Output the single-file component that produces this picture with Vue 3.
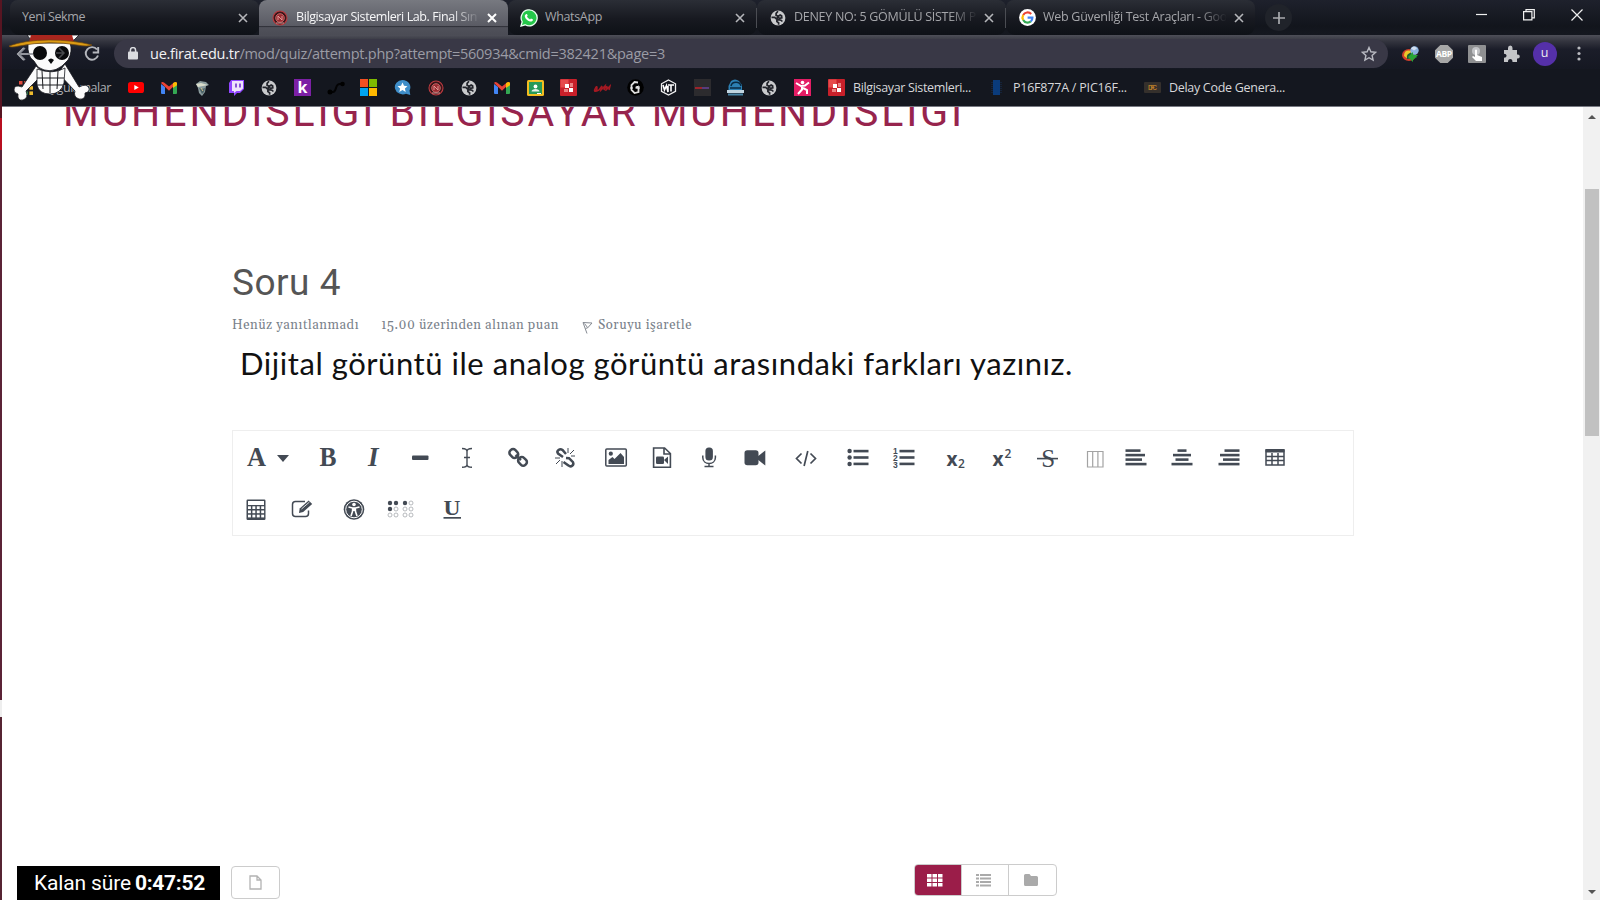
<script setup>
const vFit = {
  mounted(el, { value }) {
    const natural = el.getBoundingClientRect().width
    el.style.letterSpacing = (value - natural) / el.textContent.length + 'px'
  }
}

const svg = (w, h, body) => `<svg width="${w}" height="${h}" viewBox="0 0 ${w} ${h}" style="display:block">${body}</svg>`

const globe = svg(16, 16, '<circle cx="8" cy="8" r="7.4" fill="#c9cacc"/><path d="M1.5 7.4h3.2l2.2 2.1v2.1l1.7 1.2v2M8 1.3 6.1 3.4v1.9l2.4.9 1.6-1.1 1.5.8.2 1.9-2.3.5-1.8-1-1.2 1.2 1.4 1.2 3.1.5 1.4 1.3" fill="none" stroke="#22242b" stroke-width="1.7"/>')
const gmail = svg(16, 16, '<path d="M0 4v9q0 1 1 1h3V7z" fill="#4285f4"/><path d="M12 7v7h3q1 0 1-1V4z" fill="#34a853"/><path d="M0 3q1-1.8 3-.6l5 4 5-4q2-1.2 3 .6L8 10.8z" fill="#ea4335"/><path d="M12 3.2l1-.8q2-1.2 3 .6v2.2L12 8z" fill="#fbbc04"/>')
const crest = svg(16, 16, '<circle cx="8" cy="8" r="7" fill="#3b1519" stroke="#bd3b40" stroke-width="1.1"/><circle cx="8" cy="8" r="4.3" fill="#9c2b31" stroke="#d47a78" stroke-width=".8"/><path d="M6 10V6l4 4V6M4 13h8" fill="none" stroke="#e6a4a0" stroke-width=".9"/>')
const squares = svg(17, 17, '<rect width="17" height="17" rx="1" fill="#c8202a"/><rect x=".5" y=".5" width="8" height="8" fill="#e64b4d"/><path d="M5 5h4v4H5zM9 9h4v4H9z" fill="#fff"/><path d="M10 4h3v4h-3zM4 10h4v3H4z" fill="#e98282"/>')

const tabs = [
  { title: 'Yeni Sekme', w: 63 },
  { title: 'Bilgisayar Sistemleri Lab. Final Sın', w: 181, icon: crest, active: true, fade: true },
  { title: 'WhatsApp', w: 57, icon: svg(18, 18, '<path d="M1 17 2.2 12.8A8 8 0 1 1 5.2 15.8z" fill="#25c74a" stroke="#e9fff0" stroke-width="1.3"/><path d="M6.2 5.1c.8-.8 1.5 1.3 1.5 1.5l-.7 1c.7 1.4 1.7 2.2 3 2.8l1-1 2 1c0 1.7-1.8 2.4-3 2-2.7-.9-4.7-2.7-5.2-5-.1-1 .6-1.6 1.4-2.3z" fill="#fff"/>'), line: true },
  { title: 'DENEY NO: 5 GÖMÜLÜ SİSTEM P', w: 182, icon: globe, fade: true, line: true },
  { title: 'Web Güvenliği Test Araçları - Goo', w: 184, icon: svg(17, 17, '<circle cx="8.5" cy="8.5" r="8.4" fill="#fff"/><g fill="none" stroke-width="2.2"><path d="M12.2 5A5 5 0 0 0 4.2 6" stroke="#ea4335"/><path d="M4.2 6a5 5 0 0 0 0 5" stroke="#fbbc05"/><path d="M4.2 11a5 5 0 0 0 7.6 1.4" stroke="#34a853"/><path d="M11.8 12.4a5 5 0 0 0 1.6-3.8H8.6" stroke="#4285f4"/></g>'), fade: true }
]

const bookmarks = [
  svg(16, 13, '<rect y="1" width="16" height="11" rx="2.6" fill="#f00"/><path d="M6.3 4v5L10.8 6.5z" fill="#fff"/>'),
  gmail,
  svg(16, 16, '<path d="M2 4 6 1l6 1 3 3-3 1-1 6-3 4-3-3-1-5z" fill="#8a9b9d"/><path d="M2 4 7 3l7 2-5 1-5 1z" fill="#d9dccb"/><path d="m5 8 3 1 3-1-1 4-2 2z" fill="#4d6468"/><path d="m7 8 2 3" stroke="#d6c08c"/>'),
  svg(16, 16, '<path d="M3 0h13v9l-4 4H9l-3 3v-3H1V3z" fill="#9146ff"/><path d="M4 1h11v7.5L12 11H8.5L6 13v-2H4z" fill="#eee5fb"/><path d="M8 3.6v4M12 3.6v4" stroke="#7133cc" stroke-width="1.6"/>'),
  globe,
  svg(17, 17, '<rect width="17" height="17" fill="#7c20a5"/><text x="8.5" y="14" text-anchor="middle" font-family="Open Sans, sans-serif" font-weight="700" font-size="16" fill="#fff">k</text>'),
  svg(18, 16, '<path d="M2 12h4q2 0 3-4t4-4h3" fill="none" stroke="#030304" stroke-width="2"/><circle cx="3" cy="12" r="2.5" fill="#000"/><circle cx="15.5" cy="4" r="2.3" fill="#000"/>'),
  svg(17, 17, '<path d="M0 0h8v8H0z" fill="#f25022"/><path d="M9 0h8v8H9z" fill="#7fba00"/><path d="M0 9h8v8H0z" fill="#00a4ef"/><path d="M9 9h8v8H9z" fill="#ffb900"/>'),
  svg(17, 16, '<path d="M8.5 0a8 7.2 0 0 1 7 10.5l.8 4.5-4.3-1.2A8 7.2 0 1 1 8.500 0z" fill="#3f8ec9"/><path d="m8.500 2.500 1.500 3.300 3.500.4-2.600 2.300.8 3.400-3.200-1.800-3.200 1.800.8-3.400-2.600-2.300 3.500-.4z" fill="#fff"/>'),
  crest, globe, gmail,
  svg(17, 16, '<rect width="17" height="16" rx="1.500" fill="#f4bd20"/><rect x="2" y="2" width="13" height="12" fill="#279a59"/><circle cx="8.500" cy="6.500" r="1.900" fill="#fff"/><path d="M4.500 11.500c0-3.500 8-3.500 8 0z" fill="#e5f3ea"/><path d="M10 13h4v1h-4z" fill="#fff"/>'),
  squares,
  svg(18, 10, '<path d="M1 8q3 0 3-3T2 6t4 1l3-4-1 4 4-4-1 4q3-5 3-3t-1 3 4-4l-1 4" fill="none" stroke="#a51922" stroke-width="1.500"/>'),
  svg(17, 17, '<circle cx="8.500" cy="8.500" r="8.300" fill="#000"/><path d="M11 3.500 7.500 3l-3 3v5l3 3 4-1V9L8.500 8.500" fill="none" stroke="#dedede" stroke-width="1.800"/><path d="m9 8 3-1v3M3 9h3" fill="none" stroke="#eee"/>'),
  svg(17, 17, '<path d="M8.500 1 15.500 4.800v7.500L8.500 16 1.500 12.300V4.800z" fill="none" stroke="#f1f1f1" stroke-width="1.300"/><path d="m3 6 1.500 5 2-4.500L8 13V7M8 6h6M11 6.500v6" fill="none" stroke="#fff" stroke-width="1.600"/>'),
  svg(17, 17, '<rect width="17" height="17" fill="#2c2b2e"/><path d="M1 9h7" stroke="#b8242c" stroke-width="1.600"/><path d="M8 9h7" stroke="#654192" stroke-width="1.600"/>'),
  svg(17, 17, '<path d="M1.500 11V7L4 2q4-3 8 0l3 4v5z" fill="#2c80b4"/><path d="M4 7c1-5 9-5 10 0M3 9h11" fill="none" stroke="#092a43" stroke-width="1.500"/><rect y="11" width="17" height="3" fill="#c0d4df"/><path d="M1 15.500h15" stroke="#4683a4" stroke-width="2"/>'),
  globe,
  svg(17, 17, '<rect width="17" height="17" fill="#e41d65"/><circle cx="8.500" cy="3.500" r="1.800" fill="#fff"/><path d="m2 4 5 3 4-.5 4-3M8 6.500v4L4 15M9 9l4 2v4" fill="none" stroke="#fff" stroke-width="2"/>')
]

const textBookmarks = [
  { t: 'Bilgisayar Sistemleri...', w: 118, icon: squares },
  { t: 'P16F877A / PIC16F...', w: 114, icon: svg(17, 17, '<path d="M5 1h7v15H5z" fill="#0a3b7b"/><path d="M4 3v11M13 3v11" stroke="#173057" stroke-dasharray="1 1"/>') },
  { t: 'Delay Code Genera...', w: 116, icon: svg(17, 11, '<rect width="17" height="11" rx="1" fill="#35302c"/><text x="8.500" y="8" text-anchor="middle" textLength="9" font-family="Liberation Sans, sans-serif" font-weight="700" font-size="6.500" fill="#b47b29">DFC</text>') }
]

const ink = '#434a54'
const g = body => svg(26, 24, `<g fill="${ink}">${body}</g>`)
const rows4 = list => list.map(([x, w], i) => `<rect x="${x}" y="${3.3 + i * 4.5}" width="${w}" height="2.600"/>`).join('')
const serif = 'font-family="Liberation Serif, serif" font-weight="700"'
const calcDots = [0, 1, 2].map(r => [0, 1, 2, 3].map(c => `<rect x="${5 + c * 4.400}" y="${9.300 + r * 4.200}" width="2.900" height="2.700" fill="#fff"/>`).join('')).join('')
const braille = [0, 1, 2, 3].map(c => [0, 1, 2].map(r => {
  const on = (r === 0 && c < 3) || (r === 1 && c === 0)
  return `<circle cx="${[3, 9, 18, 24][c]}" cy="${6 + r * 6}" r="${on ? 2.200 : 2}" fill="${on ? ink : 'none'}" stroke="${on ? 'none' : '#a5a8ad'}" stroke-width=".8"/>`
}).join('')).join('')

const toolbar = [
  [
    [{ wide: true, i: svg(44, 24, `<text x="2" y="20" ${serif} font-size="27" textLength="19" lengthAdjust="spacingAndGlyphs" fill="${ink}">A</text><path d="M32 9h12l-6 7z" fill="${ink}"/>`) },
      { i: g(`<text x="4.500" y="20" ${serif} font-size="27" textLength="17" lengthAdjust="spacingAndGlyphs">B</text>`) },
      { i: g(`<text x="7" y="20" ${serif} font-style="italic" font-size="27" textLength="12">I</text>`) },
      { i: g('<rect x="5" y="9.500" width="16.500" height="4.500" rx="1"/>') },
      { i: g(`<path d="M8 2.500c3 0 5 .5 5 3v13c0 2-2 2.800-5 2.800M18 2.500c-3 0-5 .5-5 3v13c0 2 2 2.800 5 2.800M10 11.500h6" fill="none" stroke="${ink}" stroke-width="1.400"/>`) }],
    [{ i: g(`<g fill="none" stroke="${ink}" stroke-width="2.500"><rect x="4.300" y="4" width="9" height="7" rx="3" transform="rotate(45 8.800 7.500)"/><rect x="13" y="11.800" width="9" height="7" rx="3" transform="rotate(45 17.500 15.300)"/><path d="m10.500 9 5.500 5"/></g>`) },
      { i: g(`<g fill="none" stroke="${ink}"><path d="M11 11 6 7.500q-1.500-2 .5-3.500t4 0L14 8M14 12l3 .2 4 4q1 2-.8 3.500t-3.800-.3L11.500 16" stroke-width="2.500"/><path d="M16 7V2M18 8l4-4M19 10h4M10 15v6M8 14l-4 4M8 12H3" stroke-width="1"/></g>`) }],
    [{ i: g(`<rect x="2.800" y="3" width="20.500" height="17" rx="1" fill="none" stroke="${ink}" stroke-width="1.500"/><circle cx="7.800" cy="7.700" r="2.100"/><path d="M5.500 18v-4l4-3 2 2 6-6 3.500 4v7z"/>`) },
      { i: g(`<path d="M4.600 2h11l5.800 5.500v13.700H4.600zM15 2v6h6.400" fill="none" stroke="${ink}" stroke-width="1.600"/><rect x="7" y="10.500" width="8" height="7.500" rx="1.300"/><path d="m15 14 4-3.500V18z"/>`) },
      { i: g(`<rect x="9.400" y="1.500" width="7.500" height="13" rx="3.500"/><path d="M6.800 9.500v2c0 8 12.600 8 12.600 0v-2M13 17.500v3M8.500 20.600h9" fill="none" stroke="${ink}" stroke-width="1.500"/>`) },
      { i: g('<rect x="2.500" y="4.300" width="14" height="15" rx="2.800"/><path d="m15 11 8.300-6.500v15L15 13z"/>') }],
    [{ i: g(`<path d="m8.500 7.500-5 5 5 5M17.500 7.500l5 5-5 5M14.800 5l-3.700 15" fill="none" stroke="${ink}" stroke-width="1.700"/>`) }],
    [{ i: g('<circle cx="4.600" cy="5" r="2.200"/><circle cx="4.600" cy="11.500" r="2.200"/><circle cx="4.600" cy="18" r="2.200"/><rect x="8.500" y="3.800" width="15" height="2.600"/><rect x="8.500" y="10.200" width="15" height="2.600"/><rect x="8.500" y="16.600" width="15" height="2.600"/>') },
      { i: g('<g font-family="Liberation Sans, sans-serif" font-weight="700" font-size="8.500"><text x="2" y="7.500">1</text><text x="2" y="14.500">2</text><text x="2" y="21.500">3</text></g><rect x="8.500" y="3.800" width="15" height="2.600"/><rect x="8.500" y="10.200" width="15" height="2.600"/><rect x="8.500" y="16.600" width="15" height="2.600"/>') }],
    [{ i: g('<g font-family="Open Sans, sans-serif" font-weight="700"><text x="3.500" y="19.500" font-size="20" textLength="11" lengthAdjust="spacingAndGlyphs">x</text><text x="15" y="22" font-size="12" font-weight="600">2</text></g>') },
      { i: g('<g font-family="Open Sans, sans-serif" font-weight="700"><text x="3.500" y="19.500" font-size="20" textLength="11" lengthAdjust="spacingAndGlyphs">x</text><text x="15.500" y="12" font-size="12" font-weight="600">2</text></g>') },
      { i: g('<text x="6.300" y="20.500" font-family="Liberation Serif, serif" font-size="25">S</text><path d="M2 11.800h21v1.600H2z"/>') },
      { i: svg(26, 24, '<path d="M5.500 5.500h15.500v15.500H5.500zM10.700 5.500V21M15.900 5.500V21" fill="none" stroke="#a3a3a3" stroke-width="1.200"/>') }],
    [{ i: g(rows4([[2.500, 15], [2.500, 19.500], [2.500, 16.500], [2.500, 21]])) },
      { i: g(rows4([[8.500, 9], [4, 18], [6.500, 13], [2.500, 21]])) },
      { i: g(rows4([[8.500, 15], [4, 19.500], [7, 16.500], [2.500, 21]])) },
      { i: g(`<path d="M4 4h18v15H4zM10 7v12M16 7v12M4 10.500h18M4 14.500h18" fill="none" stroke="${ink}" stroke-width="1.500"/><rect x="3.500" y="3" width="19" height="3.500" rx="1"/>`) }]
  ],
  [
    [{ i: g(`<rect x="3.500" y="2.500" width="19" height="20.500" rx="1.200"/><rect x="5" y="4" width="16" height="4" fill="#fff"/>${calcDots}`) },
      { i: g(`<path d="M16 4.500H6.500q-3 0-3 3v9q0 3 3 3h10q3 0 3-3v-3" fill="none" stroke="${ink}" stroke-width="1.500"/><path d="m10 16 .7-4.500 9-8 3.500 3.500-9 8z"/><path d="m12.500 12 8-7" stroke="#fff" stroke-width=".8"/>`) }],
    [{ i: g(`<circle cx="13" cy="12.500" r="10.300"/><circle cx="13" cy="12.500" r="8.300" fill="none" stroke="#fff" stroke-width="1"/><circle cx="13" cy="7.500" r="1.800" fill="#fff"/><path d="m7.500 10 4 1h3l4-1M13 11v3m-1.300-2.500-.2 3-1.500 4.500m4.300-7.500.2 3 1.500 4.500" fill="none" stroke="#fff" stroke-width="1.600"/>`) },
      { i: svg(27, 24, braille) }],
    [{ i: g(`<text x="4.500" y="17.500" ${serif} font-size="22" textLength="17" lengthAdjust="spacingAndGlyphs">U</text><rect x="4.500" y="20" width="17.500" height="1.700"/>`) }]
  ]
]

const extensions = [
  svg(20, 18, '<ellipse cx="8" cy="10" rx="7" ry="6" fill="#cf3f2c"/><path d="M3 11q0-7 8-5l2 5q-5 5-10 0" fill="#ebc829"/><path d="M6 14q-2-6 7-7l3 6z" fill="#1d5c35"/><circle cx="13.500" cy="5.500" r="4.200" fill="#8bb2df"/><path d="M10 3.500q3-4 6 0l-3 2z" fill="#d1dff0"/><path d="m7 12 5-5v3h5l-5 5v2z" fill="#28a536"/>'),
  svg(18, 18, '<path d="M5.300 0h7.400L18 5.300v7.400L12.700 18H5.300L0 12.700V5.300z" fill="#a7a7a7"/><text x="9" y="12" text-anchor="middle" textLength="16" font-family="Open Sans, sans-serif" font-weight="700" font-size="8.500" fill="#fff">ABP</text>'),
  svg(18, 18, '<rect width="18" height="18" rx="1" fill="#8f9092"/><circle cx="8" cy="6" r="4" fill="#c2c3c6"/><path d="M7 5q1-1 2 0v5l5 2v4H8l-4-4 1-1 2 1z" fill="#fff"/>'),
  svg(18, 18, '<path d="M2 5h4V3q0-2.500 2.300-2.500T10.500 3v2H15v4.500h.8q2 0 2 2t-2 2H15V17h-4.500q0-3-2.300-3T6 17H2v-4.200q2.600 0 2.600-2T2 8.700z" fill="#c4c5c8"/>')
]
</script>

<template>
  <div class="screen">
    <div class="desktop-edge"><i class="red"></i><i class="wine"></i><i class="pale"></i><i class="rest"></i></div>
    <div class="window">
      <header class="tabstrip">
        <div v-for="t in tabs" :key="t.title" class="tab" :class="{ active: t.active, line: t.line }">
          <span v-if="t.icon" class="favicon" v-html="t.icon"></span>
          <span class="tab-title" :class="{ fade: t.fade }"><span v-fit="t.w" class="fit">{{ t.title }}</span></span>
          <svg class="x" width="10" height="10" viewBox="0 0 10 10"><path d="M1 1l8 8M9 1L1 9" /></svg>
        </div>
        <div class="newtab"><svg width="12" height="12" viewBox="0 0 12 12"><path d="M6 0v12M0 6h12" stroke="#a9aaae" stroke-width="1.700" /></svg></div>
        <div class="controls">
          <svg width="11" height="12" viewBox="0 0 11 12"><path d="M0 5.500h11" /></svg>
          <svg width="12" height="12" viewBox="0 0 12 12"><path d="M.6 2.600h8.300v8.300H.6zM3 2.500V.6h8.300v8.300H9" /></svg>
          <svg width="12" height="12" viewBox="0 0 12 12"><path d="M.5.5l11 11M11.500.5l-11 11" /></svg>
        </div>
      </header>

      <div class="navbar">
        <div class="nav-buttons">
          <svg width="16" height="16" viewBox="0 0 16 16"><path d="M15 8H2M8 2L2 8l6 6" stroke="#b5b7bd" /></svg>
          <svg width="16" height="16" viewBox="0 0 16 16"><path d="M1 8h13M8 2l6 6-6 6" stroke="#72757b" /></svg>
          <svg width="16" height="16" viewBox="0 0 16 16"><path d="M13 3.500A6.300 6.300 0 1 0 14 9.500M14.200 1v5.500H8.700" stroke="#b5b7bd" /></svg>
        </div>
        <div class="omnibox">
          <svg width="10" height="13" viewBox="0 0 10 13"><rect y="4.500" width="10" height="8" rx="1" fill="#dbdce0" /><path d="M2.400 5V3.200a2.600 2.600 0 0 1 5.200 0V5" fill="none" stroke="#dbdce0" stroke-width="1.500" /></svg>
          <span v-fit="515" class="fit url"><b>ue.firat.edu.tr</b>/mod/quiz/attempt.php?attempt=560934&amp;cmid=382421&amp;page=3</span>
          <svg class="star" width="16" height="16" viewBox="0 0 16 16"><path d="M8 1.500l1.900 4.300 4.700.5-3.500 3.100 1 4.700L8 11.700l-4.100 2.400 1-4.700L1.400 6.300l4.700-.5z" fill="none" stroke="#b9bac2" stroke-width="1.400" /></svg>
        </div>
        <div class="extensions">
          <span v-for="(e, i) in extensions" :key="i" class="ext" v-html="e"></span>
          <span class="avatar">u</span>
          <svg width="4" height="15" viewBox="0 0 4 15"><circle cx="2" cy="2" r="1.600" /><circle cx="2" cy="7.500" r="1.600" /><circle cx="2" cy="13" r="1.600" /></svg>
        </div>
      </div>

      <div class="bookmarks">
        <div class="apps">
          <svg width="14" height="14" viewBox="0 0 14 14">
            <path d="M0 0h3.500v3.500H0zM5.200 0h3.500v3.500H5.200zM10.400 0H14v3.500h-3.600z" fill="#df4b3c" />
            <path d="M0 5.200h3.500v3.500H0z" fill="#34a45a" /><path d="M5.200 5.200h3.500v3.500H5.200z" fill="#397fdc" /><path d="M10.400 5.200H14v3.500h-3.600z" fill="#edba2d" />
            <path d="M0 10.400h3.500V14H0zM5.200 10.400h3.500V14H5.200z" fill="#34a45a" /><path d="M10.400 10.400H14V14h-3.600z" fill="#edba2d" />
          </svg>
          <span v-fit="69" class="fit">Uygulamalar</span>
        </div>
        <span v-for="(b, i) in bookmarks" :key="i" class="bm" v-html="b"></span>
        <span v-for="b in textBookmarks" :key="b.t" class="bm-text"><span class="bm-icon" v-html="b.icon"></span><span v-fit="b.w" class="fit">{{ b.t }}</span></span>
      </div>

      <svg class="mascot" width="86" height="66" viewBox="0 0 86 66">
        <g stroke="#15171d" stroke-width=".8" fill="#fbfbfb">
          <path d="M28 31 14 52q-8-3-8 3 0 3 4 4-1 7 5 6 6-2 3-9L36 38z" />
          <path d="m57 29 14 23q8-4 10 1 1 4-4 5 1 7-6 6-6-2-4-8L50 38z" />
          <path d="m19 0 4 5h43l5-5z" />
          <path d="M29 34q16 6 28-1l-1 15q-3 11-14 11t-13-9z" />
          <path d="M20 8q-1 14 6 18l4 6q12 8 24-1l6-6q5-9 2-17z" />
        </g>
        <path d="M29 43h27M29 50h26M34 36l1 18M42 37v21M50 36l-1 18" fill="none" stroke="#1b1c20" stroke-width="1" />
        <circle cx="32" cy="18" r="7" fill="#090a0c" /><circle cx="54" cy="18" r="7" fill="#090a0c" /><path d="M40 25q3-3 6 0l-3 4z" fill="#090a0c" />
        <path d="M23 0h41l2 7H21z" fill="#a9261e" />
        <path d="M1 11Q17 5 41 5t43 5q-4 2-15 0-27-5-58 1-9 2-10 0z" fill="#dc9c14" stroke="#73480b" stroke-width=".7" />
        <g fill="none" stroke="#868991" stroke-width="1.500"><path d="M25 19H11M17 13l-6 6 6 6" /><path d="M48 18h8M51 13l5 5-5 5" stroke="#484a4d" /></g>
      </svg>

      <main class="viewport">
        <div class="page">
          <h1><span v-fit="902" class="fit">MÜHENDİSLİĞİ BİLGİSAYAR MÜHENDİSLİĞİ</span></h1>
          <section class="question">
            <h2><span v-fit="109" class="fit">Soru 4</span></h2>
            <div class="info">
              <span v-fit="127" class="fit">Henüz yanıtlanmadı</span>
              <span v-fit="178" class="fit score">15.00 üzerinden alınan puan</span>
              <svg width="11" height="13" viewBox="0 0 11 13"><path d="M1 1.500l4 11M1 1.500l9 .5-4.500 5-2 .3M2.500 2.500l3 4" fill="none" stroke="#858a92" stroke-width="1" /></svg>
              <span v-fit="94" class="fit">Soruyu işaretle</span>
            </div>
            <p><span v-fit="833" class="fit">Dijital görüntü ile analog görüntü arasındaki farkları yazınız.</span></p>
            <div class="editor">
              <div v-for="(row, r) in toolbar" :key="r" class="row">
                <div v-for="(group, k) in row" :key="k" class="group">
                  <span v-for="(b, n) in group" :key="n" class="tool" :class="{ wide: b.wide }" v-html="b.i"></span>
                </div>
              </div>
            </div>
          </section>
          <footer class="bottom">
            <div class="timer"><span v-fit="97" class="fit">Kalan süre</span><b v-fit="70" class="fit">0:47:52</b></div>
            <div class="file"><svg width="13" height="15" viewBox="0 0 13 15"><path d="M1 1h7l4 4v9H1zM8 1v4h4" fill="none" stroke="#b3b3b3" stroke-width="1.300" /></svg></div>
            <div class="views">
              <span class="on"><svg width="16" height="13" viewBox="0 0 16 13"><path d="M0 0h4.500v3.500H0zM5.500 0H10v3.500H5.500zM11 0h4.500v3.500H11zM0 4.500h4.500V8H0zM5.500 4.500H10V8H5.500zM11 4.500h4.500V8H11zM0 9h4.500v3.500H0zM5.500 9H10v3.500H5.500zM11 9h4.500v3.500H11z" fill="#fff" /></svg></span>
              <span><svg width="15" height="13" viewBox="0 0 15 13"><path d="M0 0h3v2H0zM4 0h11v2H4zM0 3.500h3v2H0zM4 3.500h11v2H4zM0 7h3v2H0zM4 7h11v2H4zM0 10.500h3v2H0zM4 10.500h11v2H4z" fill="#aaa" /></svg></span>
              <span><svg width="14" height="12" viewBox="0 0 14 12"><path d="M0 1.500Q0 0 1.500 0h4L7 2h5.500Q14 2 14 3.500v7q0 1.500-1.500 1.500h-11Q0 12 0 10.500z" fill="#aaa" /></svg></span>
            </div>
          </footer>
        </div>
        <div class="scrollbar"><i class="up"></i><i class="thumb"></i><i class="down"></i></div>
      </main>
    </div>
  </div>
</template>

<style>
body { margin: 0; overflow: hidden; }
</style>

<style scoped>
.screen { display: flex; width: 1600px; height: 900px; overflow: hidden; background: #fff; font-family: "Open Sans", "Noto Sans", sans-serif; }
.screen * { box-sizing: border-box; }
.fit { display: inline-block; white-space: pre; flex: none; }
.desktop-edge { width: 2px; flex: none; display: flex; flex-direction: column; padding-top: 118px; background: #571522; }
.desktop-edge .red { height: 32px; background: #b80f20; }
.desktop-edge .wine { height: 550px; background: #5b2336; }
.desktop-edge .pale { height: 17px; background: #eee; }
.desktop-edge .rest { flex: 1; background: #562432; }
.window { position: relative; width: 1598px; height: 900px; display: flex; flex-direction: column; }

.tabstrip { height: 35px; display: flex; padding-left: 8px; background: linear-gradient(#1e212c, #12151c 75%, #151820); flex: none; }
.tab { position: relative; width: 249px; flex: none; display: flex; align-items: center; padding: 0 11px 0 12px; color: #a5a6aa; font-size: 12.5px; background: linear-gradient(#2b2e36, #171920 55%, #0e1117); border-radius: 8px 8px 9px 9px; }
.tab.active { color: #f7f7f8; background: linear-gradient(#777980, #5a5b64 74%, #2c2d35 75%, #50515a 79%, #4b4c55); border-radius: 8px 8px 0 0; }
.tab.line { border-right: 1px solid transparent; }
.tab.line::after { content: ""; position: absolute; right: -1px; top: 8px; width: 1px; height: 20px; background: #4b4d53; }
.favicon { width: 18px; display: flex; justify-content: center; margin-right: 7px; }
.tab.active .favicon { margin-left: 0; }
.tab-title { flex: 1; overflow: hidden; line-height: 20px; padding-bottom: 1px; }
.fade { mask-image: linear-gradient(90deg, #000 155px, transparent 184px); }
.x { flex: none; fill: none; stroke: #b5b6ba; stroke-width: 1.6; }
.active .x { stroke: #fff; stroke-width: 2; }
.newtab { width: 27px; height: 27px; margin: 4px 0 0 10px; border-radius: 50%; display: flex; align-items: center; justify-content: center; background: #20232a; }
.controls { margin-left: auto; display: flex; gap: 36px; padding: 9px 17px 0 0; }
.controls svg { fill: none; stroke: #f0f0f0; stroke-width: 1.2; }

.navbar { height: 34px; display: flex; align-items: center; flex: none; padding: 4px 0 1px 14px; background: linear-gradient(#4e4f58, #34353f 18%, #1b1d29 42%, #151822); }
.nav-buttons { display: flex; gap: 18px; width: 98px; }
.nav-buttons svg { fill: none; stroke-width: 1.9; }
.omnibox { width: 1274px; height: 29px; flex: none; border-radius: 15px; background: #393846; display: flex; align-items: center; padding: 0 11px 0 14px; }
.url { margin-left: 12px; font-size: 14.5px; line-height: 20px; color: #9b9ca5; }
.url b { font-weight: 400; color: #f3f3f5; }
.star { margin-left: auto; }
.extensions { display: flex; align-items: center; padding-left: 6px; }
.ext { width: 33.400px; display: flex; justify-content: center; }
.avatar { width: 24px; height: 24px; border-radius: 50%; background: #5530a9; color: #eee; font-size: 12.5px; line-height: 22px; text-align: center; margin: 0 18px 0 5px; }
.extensions > svg { fill: #b9babf; margin-left: 2px; }

.bookmarks { height: 38px; flex: none; display: flex; align-items: center; padding-left: 17px; background: #14171f; border-bottom: 1px solid #777982; color: #d7d7da; font-size: 12.5px; }
.apps { width: 100px; display: flex; align-items: center; gap: 9px; flex: none; color: #adafb3; }
.bm { width: 33.330px; flex: none; display: flex; justify-content: center; }
.bm-text { display: flex; align-items: center; margin-left: 9px; }
.bm-text + .bm-text { margin-left: 17px; }
.bm-icon { width: 17px; margin-right: 8px; }
.mascot { position: absolute; left: 6px; top: 35px; }

.viewport { height: 793px; display: flex; overflow: hidden; background: #fff; }
.page { width: 1581px; display: flex; flex-direction: column; overflow: hidden; }
h1, h2 { font-family: Roboto, sans-serif; font-weight: 400; margin: 0; }
h1 { font-size: 41px; line-height: 48px; height: 48px; margin: -19px 0 0 61px; color: #97244d; }
.question { margin: 125px 0 0 230px; }
h2 { font-size: 37px; line-height: 44px; height: 46px; color: #555; }
.info { display: flex; align-items: center; height: 20px; margin-top: 8px; font-family: Gelasio, "DejaVu Serif", serif; font-size: 13px; color: #79818a; }
.score { margin: 0 23px 0 22px; }
.info svg { margin: 4px 5px 0 0; }
p { margin: 6px 0 0 8px; height: 50px; font-family: Lato, sans-serif; font-size: 31px; line-height: 44px; color: #111; }
.editor { width: 1122px; height: 106px; border: 1px solid #eee; margin-top: 39px; padding-top: 15px; }
.row { display: flex; gap: 5.500px; height: 51px; }
.group { display: flex; }
.group:nth-child(7) { margin-left: -10px; }
.tool { width: 46.200px; height: 24px; display: flex; justify-content: center; }
.tool.wide { width: 72px; padding-right: 4px; }

.bottom { margin-top: auto; height: 36px; display: flex; align-items: flex-start; }
.timer { width: 203px; height: 34px; margin: 2px 0 0 15px; padding-left: 17px; display: flex; gap: 4px; align-items: center; background: #000; color: #fff; font-family: Roboto, sans-serif; font-size: 21px; line-height: 34px; }
.file { width: 49px; height: 33px; margin: 2px 0 0 11px; border: 1px solid #ccc; border-radius: 4px; display: flex; align-items: center; justify-content: center; }
.views { width: 143px; height: 32px; margin-left: 634px; display: flex; border: 1px solid #ccc; border-radius: 4px; overflow: hidden; }
.views span { flex: 1; display: flex; align-items: center; justify-content: center; padding-right: 4px; border-left: 1px solid #ccc; }
.views .on { background: #9b1d49; border-left: 0; margin: -1px 0 -1px -1px; }
.scrollbar { width: 17px; background: #f1f1f1; display: flex; flex-direction: column; align-items: center; }
.up, .down { width: 0; height: 0; border: 4px solid transparent; }
.up { border-bottom-color: #555; border-top: 0; margin-top: 8px; }
.thumb { width: 14px; height: 247px; margin-top: 70px; background: #c1c1c1; }
.down { border-top-color: #555; border-bottom: 0; margin-top: auto; margin-bottom: 6px; }
</style>
